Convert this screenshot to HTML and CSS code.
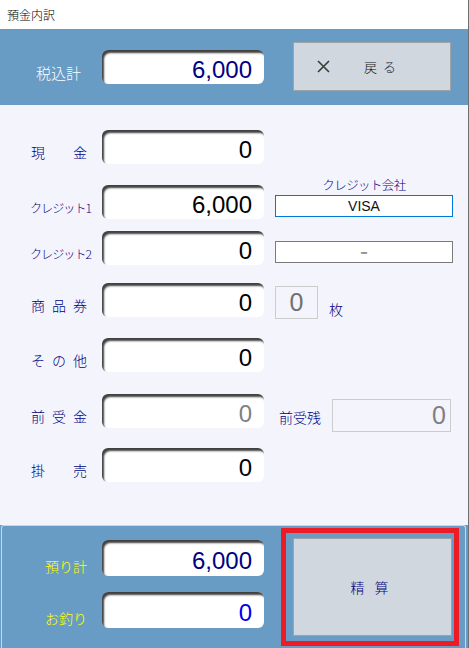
FILE: index.html
```html
<!DOCTYPE html>
<html lang="ja">
<head>
    <meta charset="UTF-8">
    <meta name="viewport" content="width=device-width, initial-scale=1.0">
    <title>預金内訳</title>
    <link rel="stylesheet" href="styles.css">
</head>
<body>
    <div class="window">
        <div class="titlebar">預金内訳</div>

        <div class="total-band">
            <div class="band-label">税込計</div>
            <div class="field field-navy">6,000</div>
            <button class="btn btn-back" type="button">
                <svg width="13" height="13" viewBox="0 0 13 13"><path d="M1 1L12 12M12 1L1 12" stroke="#3a3a3a" stroke-width="1.6" fill="none"/></svg>
                <span class="back-text">戻る</span>
            </button>
        </div>

        <div class="main">
            <div class="row row-first">
                <div class="label"><span>現</span><span>金</span></div>
                <div class="field">0</div>
            </div>
            <div class="row row-credit1">
                <div class="label label-small">クレジット1</div>
                <div class="field">6,000</div>
                <div class="side company">
                    <div class="caption">クレジット会社</div>
                    <div class="company-box selected">VISA</div>
                </div>
            </div>
            <div class="row row-credit2">
                <div class="label label-small">クレジット2</div>
                <div class="field">0</div>
                <div class="side company">
                    <div class="company-box">－</div>
                </div>
            </div>
            <div class="row row-gift">
                <div class="label"><span>商</span><span>品</span><span>券</span></div>
                <div class="field">0</div>
                <div class="side count">
                    <div class="count-box">0</div>
                    <div class="unit">枚</div>
                </div>
            </div>
            <div class="row row-other">
                <div class="label"><span>そ</span><span>の</span><span>他</span></div>
                <div class="field">0</div>
            </div>
            <div class="row row-advance">
                <div class="label"><span>前</span><span>受</span><span>金</span></div>
                <div class="field field-gray">0</div>
                <div class="side balance">
                    <div class="balance-label">前受残</div>
                    <div class="balance-box">0</div>
                </div>
            </div>
            <div class="row row-credit-sale">
                <div class="label"><span>掛</span><span>売</span></div>
                <div class="field">0</div>
            </div>
        </div>

        <div class="footer">
            <div class="panel">
                <div class="pay-col">
                    <div class="pay-row">
                        <div class="pay-label">預り計</div>
                        <div class="field field-navy">6,000</div>
                    </div>
                    <div class="pay-row">
                        <div class="pay-label">お釣り</div>
                        <div class="field field-blue">0</div>
                    </div>
                </div>
                <div class="settle-wrap">
                    <button class="btn btn-settle" type="button">精算</button>
                    <div class="highlight"></div>
                </div>
            </div>
        </div>
    </div>
</body>
</html>
```

FILE: styles.css
```css
body {
    margin: 0;
    font-family: "Noto Sans CJK JP", sans-serif;
    font-weight: 300;
    background-color: #fff;
}
.window {
    width: 468px;
    height: 648px;
    border-right: 1px solid #6e6e6e;
    display: flex;
    flex-direction: column;
}
.titlebar {
    height: 29px;
    line-height: 29px;
    padding-left: 7px;
    font-size: 12px;
    color: #000;
    background-color: #fff;
}

/* top total band */
.total-band {
    height: 76px;
    flex-shrink: 0;
    background-color: #689cc5;
    display: flex;
    align-items: flex-start;
}
.band-label {
    width: 102px;
    box-sizing: border-box;
    padding-left: 36px;
    margin-top: 36px;
    font-size: 15px;
    line-height: 16px;
    color: #fff;
}
.total-band .field {
    margin-top: 21px;
}
.btn {
    font-family: inherit;
    font-weight: 300;
    background-color: #d0d7de;
    border: 1px solid #9ea3a8;
    cursor: pointer;
    box-sizing: border-box;
}
.btn-back {
    width: 158px;
    height: 49px;
    margin: 13px 0 0 29px;
    padding: 0 0 0 23px;
    display: flex;
    align-items: center;
}
.back-text {
    margin-left: 34px;
    font-size: 13px;
    letter-spacing: 6px;
    color: #111;
}

/* inset number fields */
.field {
    width: 162px;
    height: 34px;
    flex-shrink: 0;
    box-sizing: border-box;
    padding: 5px 12px 0 0;
    background-color: #fff;
    border-radius: 6px;
    box-shadow: inset 2px 3px 2px rgba(0, 0, 0, 0.75);
    font-family: "Liberation Sans", Arial, sans-serif;
    font-weight: 400;
    font-size: 24px;
    color: #000;
    display: flex;
    align-items: center;
    justify-content: flex-end;
}
.field-navy {
    color: #000080;
}
.field-blue {
    color: #0000ee;
}
.field-gray {
    color: #808080;
}

/* main list */
.main {
    height: 420px;
    flex-shrink: 0;
    box-sizing: border-box;
    padding-top: 25px;
    background-color: #f3f4fc;
}
.row {
    display: flex;
    height: 34px;
}
.row-credit1 { margin-top: 21px; }
.row-credit2 { margin-top: 12px; }
.row-gift { margin-top: 18px; }
.row-other { margin-top: 21px; }
.row-advance { margin-top: 22px; }
.row-credit-sale { margin-top: 20px; }

.label {
    width: 102px;
    box-sizing: border-box;
    padding: 0 15px 5px 31px;
    align-self: flex-end;
    font-size: 14px;
    line-height: 14px;
    color: #000080;
    display: flex;
    justify-content: space-between;
}
.label-small {
    font-size: 12px;
    letter-spacing: -0.9px;
    justify-content: flex-start;
    padding: 0 0 4px 30px;
    white-space: nowrap;
}
.side {
    margin-left: 11px;
}
.company {
    width: 178px;
    height: 34px;
    display: flex;
    flex-direction: column;
    justify-content: flex-end;
}
.caption {
    font-size: 12.5px;
    line-height: 14px;
    letter-spacing: -0.6px;
    text-align: center;
    color: #000080;
    margin-bottom: 3px;
}
.company-box {
    height: 22px;
    box-sizing: border-box;
    margin-bottom: 2px;
    border: 1px solid #7a7a7a;
    background-color: #fff;
    font-family: "Liberation Sans", Arial, sans-serif;
    font-weight: 400;
    font-size: 14px;
    line-height: 20px;
    text-align: center;
    color: #111;
}
.company-box.selected {
    border-color: #0078d7;
}
.count {
    display: flex;
    align-items: flex-start;
}
.count-box {
    width: 43px;
    height: 33px;
    box-sizing: border-box;
    margin-top: 3px;
    border: 1px solid #cccccc;
    font-family: "Liberation Sans", Arial, sans-serif;
    font-weight: 400;
    font-size: 25px;
    line-height: 31px;
    text-align: center;
    color: #707070;
}
.unit {
    margin: 19px 0 0 11px;
    font-size: 14px;
    line-height: 14px;
    color: #000080;
}
.balance {
    display: flex;
    align-items: flex-start;
    margin-left: 15px;
}
.balance-label {
    margin-top: 16px;
    font-size: 14px;
    line-height: 14px;
    color: #000080;
}
.balance-box {
    width: 119px;
    height: 33px;
    box-sizing: border-box;
    margin: 5px 0 0 11px;
    padding-right: 4px;
    border: 1px solid #cccccc;
    font-family: "Liberation Sans", Arial, sans-serif;
    font-weight: 400;
    font-size: 25px;
    line-height: 31px;
    text-align: right;
    color: #808080;
}

/* bottom payment panel */
.footer {
    flex: 1;
    display: flex;
    padding: 0 2px 0 1px;
    background-color: #689cc5;
}
.panel {
    flex: 1;
    display: flex;
    align-items: flex-start;
    padding-top: 12px;
    border: 1px solid #c4d8e8;
    border-bottom: none;
    border-radius: 3px 3px 0 0;
}
.pay-col {
    padding-top: 2px;
    display: flex;
    flex-direction: column;
    gap: 16px;
}
.pay-row {
    display: flex;
    height: 36px;
}
.pay-row .field {
    height: 36px;
}
.pay-label {
    width: 100px;
    box-sizing: border-box;
    padding: 0 0 3px 43px;
    align-self: flex-end;
    font-size: 14px;
    line-height: 14px;
    color: #ffff00;
}
.settle-wrap {
    position: relative;
    margin-left: 29px;
}
.btn-settle {
    width: 159px;
    height: 98px;
    display: block;
    font-size: 14px;
    letter-spacing: 10px;
    padding-left: 10px;
    color: #000080;
}
.highlight {
    position: absolute;
    top: -10px;
    left: -12px;
    right: -7px;
    bottom: -10px;
    border: 5px solid #ed1c24;
}
```
